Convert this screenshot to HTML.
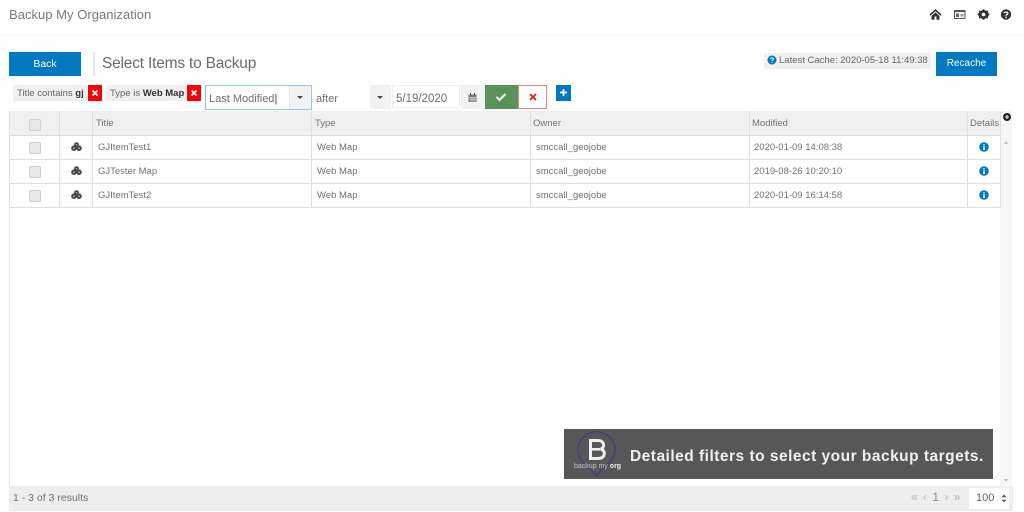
<!DOCTYPE html>
<html><head><meta charset="utf-8"><style>
html,body{margin:0;padding:0;width:1024px;height:512px;overflow:hidden;background:#fff}
body{position:relative;font-family:"Liberation Sans",sans-serif;color:#737373;font-size:9.5px}
.a{position:absolute;white-space:nowrap}
.b{position:absolute;background:#0079c1;color:#fff;text-align:center;font-size:10.5px;line-height:24px}
.l{position:absolute;background:#dedede}
.cb{position:absolute;left:29px;width:10px;height:10px;background:#e8e8e8;border:1px solid #cfcfcf;border-radius:2px}
.x{position:absolute;width:14px;height:16px;background:#f00}
.sel{position:absolute;background:#f2f2f2}
.ce{position:absolute;width:0;height:0;border-left:3px solid transparent;border-right:3px solid transparent;border-top:3px solid #444}
</style></head><body>
<div class="a" style="left:9px;top:7px;font-size:13px;letter-spacing:.03px;color:#7a7a7a">Backup My Organization</div>
<div class="l" style="left:0;top:35px;width:1024px;height:1px;background:#f3f3f3"></div>
<svg class="a" style="left:929px;top:8px" width="84" height="13" viewBox="0 0 84 13">
<path d="M.5 6.500 6.500 1 12.500 6.500 11.500 7.700 6.500 3.300 1.500 7.700ZM2.500 8 6.500 4.500 10.500 8V11.800H7.500V8.500H5.500V11.800H2.500Z" fill="#333"/>
<rect x="25.500" y="2.500" width="10.500" height="8" fill="#f4f4f4" stroke="#555"/><rect x="25.500" y="2.500" width="10.500" height="1.500" fill="#555"/><rect x="27" y="5.500" width="3" height="3.500" fill="#666"/><rect x="31.500" y="6" width="3" height="2.500" fill="#999"/>
<path d="M54.500 1 56.500 2.800 58.800 2.600 59.200 5 60.800 6.500 59.200 8 58.800 10.400 56.500 10.200 54.500 12 52.500 10.200 50.200 10.400 49.800 8 48.200 6.500 49.800 5 50.200 2.600 52.500 2.800Z" fill="#333"/><circle cx="54.500" cy="6.500" r="1.800" fill="#fff"/>
<circle cx="77" cy="6.500" r="5.200" fill="#333"/><path d="M75.200 5.200C75.400 3.700 78.800 3.700 78.800 5.400 78.800 6.600 77 6.600 77 7.800" fill="none" stroke="#fff" stroke-width="1.300"/><rect x="76.300" y="8.600" width="1.400" height="1.400" fill="#fff"/>
</svg>
<div class="b" style="left:9px;top:52px;width:72px;height:24px">Back</div>
<div class="l" style="left:93px;top:52px;width:2px;height:24px;background:#e8e8e8"></div>
<div class="a" style="left:102px;top:55px;font-size:15.5px;letter-spacing:-.2px;color:#6b6b6b">Select Items to Backup</div>
<div class="a" style="left:764px;top:53px;width:167px;height:16px;background:#f0f0f0;border-radius:2px"></div>
<svg class="a" style="left:767px;top:55px" width="10" height="10"><circle cx="5" cy="5" r="4.500" fill="#0079c1"/><path d="M3.500 4C3.600 2.500 6.500 2.500 6.500 4 6.500 5 5 5 5 6" fill="none" stroke="#fff"/><rect x="4.500" y="6.800" width="1" height="1" fill="#fff"/></svg>
<div class="a" style="left:779px;top:55px;font-size:9.5px;color:#666;line-height:12px">Latest Cache: 2020-05-18 11:49:38</div>
<div class="b" style="left:936px;top:52px;width:61px;height:24px;font-size:10px">Recache</div>

<div class="a" style="left:13px;top:85px;width:74px;height:16px;background:#f0f0f0"></div>
<div class="a" style="left:17px;top:88px;line-height:12px;color:#666">Title contains <b style="color:#333">gj</b></div>
<div class="x" style="left:88px;top:85px"></div>
<div class="a" style="left:106px;top:85px;width:80px;height:16px;background:#f0f0f0"></div>
<div class="a" style="left:110px;top:88px;line-height:12px;color:#666">Type is <b style="color:#333">Web Map</b></div>
<div class="x" style="left:187px;top:85px"></div>
<svg class="a" style="left:88px;top:85px" width="114" height="16"><path d="M4.500 5.500 9.500 10.500M9.500 5.500 4.500 10.500M103.500 5.500 108.500 10.500M108.500 5.500 103.500 10.500" stroke="#fff" stroke-width="1.800"/></svg>

<div class="sel" style="left:290px;top:86px;width:20px;height:23px"></div>
<div class="a" style="left:205px;top:85px;width:105px;height:23px;border:1px solid #8ec5e8"></div>
<div class="l" style="left:289px;top:86px;width:1px;height:23px;background:#e6e6e6"></div>
<div class="a" style="left:209px;top:92px;font-size:11px;line-height:14px;color:#707070">Last Modified<span style="color:#333;font-weight:normal">|</span></div>
<div class="ce" style="left:297px;top:96px"></div>
<div class="a" style="left:316px;top:92px;font-size:11px;line-height:14px;color:#707070">after</div>
<div class="sel" style="left:370px;top:85px;width:21px;height:24px"></div>
<div class="ce" style="left:377px;top:96px"></div>
<div class="a" style="left:392px;top:85px;width:68px;height:23px;border:1px solid #f0f0f0;box-sizing:border-box"></div>
<div class="a" style="left:396px;top:92px;font-size:11.5px;line-height:14px;color:#707070">5/19/2020</div>
<div class="sel" style="left:461px;top:85px;width:24px;height:24px"></div>
<svg class="a" style="left:468px;top:93px" width="10" height="10"><rect x=".5" y="1.500" width="8" height="7.500" fill="#777"/><path d="M1 4.500H8M1 6.500H8M3 4V9M5 4V9M7 4V9" stroke="#eee" stroke-width=".6"/><path d="M2.500 0V2M6.500 0V2" stroke="#555"/></svg>
<div class="a" style="left:485px;top:85px;width:33px;height:24px;background:#5a9359"></div>
<svg class="a" style="left:495px;top:92px" width="12" height="10"><path d="M1.500 5 4.500 8 10.500 2" fill="none" stroke="#fff" stroke-width="2"/></svg>
<div class="a" style="left:518px;top:85px;width:29px;height:24px;border:1px solid #f0806c;box-sizing:border-box;background:#fff"></div>
<svg class="a" style="left:528px;top:92px" width="10" height="10"><path d="M2 2 8 8M8 2 2 8" stroke="#e8231c" stroke-width="1.900"/></svg>
<div class="a" style="left:556px;top:85px;width:15px;height:16px;background:#0079c1"></div>
<svg class="a" style="left:559px;top:88px" width="10" height="10"><path d="M4.500 1V8M1 4.500H8" stroke="#fff" stroke-width="1.800"/></svg>

<div class="a" style="left:9px;top:111px;width:991px;height:25px;background:#f0f0f0"></div>
<div class="a" style="left:1000px;top:111px;width:12px;height:375px;background:#f6f6f6"></div>
<div class="l" style="left:9px;top:111px;width:1px;height:97px"></div>
<div class="l" style="left:59px;top:111px;width:1px;height:97px"></div>
<div class="l" style="left:92px;top:111px;width:1px;height:97px"></div>
<div class="l" style="left:311px;top:111px;width:1px;height:97px"></div>
<div class="l" style="left:530px;top:111px;width:1px;height:97px"></div>
<div class="l" style="left:749px;top:111px;width:1px;height:97px"></div>
<div class="l" style="left:967px;top:111px;width:1px;height:97px"></div>
<div class="l" style="left:1000px;top:111px;width:1px;height:97px"></div>
<div class="l" style="left:9px;top:135px;width:992px;height:1px"></div>
<div class="l" style="left:9px;top:159px;width:992px;height:1px"></div>
<div class="l" style="left:9px;top:183px;width:992px;height:1px"></div>
<div class="l" style="left:9px;top:207px;width:992px;height:1px"></div>
<div class="l" style="left:9px;top:208px;width:1px;height:278px;background:#ececec"></div>

<div class="cb" style="top:119px"></div><div class="cb" style="top:142px"></div><div class="cb" style="top:166px"></div><div class="cb" style="top:190px"></div>
<div class="a" style="left:96px;top:118px;line-height:12px">Title</div>
<div class="a" style="left:315px;top:118px;line-height:12px">Type</div>
<div class="a" style="left:533px;top:118px;line-height:12px">Owner</div>
<div class="a" style="left:752px;top:118px;line-height:12px">Modified</div>
<div class="a" style="left:970px;top:118px;line-height:12px">Details</div>

<svg class="a" style="left:71px;top:142px" width="11" height="60"><g fill="#4a4a4a"><circle cx="5.500" cy="2.700" r="2.500"/><circle cx="3" cy="6.200" r="2.800"/><circle cx="8" cy="6.200" r="2.800"/><circle cx="5.500" cy="26.700" r="2.500"/><circle cx="3" cy="30.200" r="2.800"/><circle cx="8" cy="30.200" r="2.800"/><circle cx="5.500" cy="50.700" r="2.500"/><circle cx="3" cy="54.200" r="2.800"/><circle cx="8" cy="54.200" r="2.800"/></g><g fill="#bbb"><circle cx="5.500" cy="2.700" r=".7"/><circle cx="3" cy="6.200" r=".8"/><circle cx="8" cy="6.200" r=".8"/><circle cx="5.500" cy="26.700" r=".7"/><circle cx="3" cy="30.200" r=".8"/><circle cx="8" cy="30.200" r=".8"/><circle cx="5.500" cy="50.700" r=".7"/><circle cx="3" cy="54.200" r=".8"/><circle cx="8" cy="54.200" r=".8"/></g></svg>

<div class="a" style="left:98px;top:142px;line-height:12px">GJItemTest1</div>
<div class="a" style="left:98px;top:166px;line-height:12px">GJTester Map</div>
<div class="a" style="left:98px;top:190px;line-height:12px">GJItemTest2</div>
<div class="a" style="left:317px;top:142px;line-height:12px">Web Map</div>
<div class="a" style="left:317px;top:166px;line-height:12px">Web Map</div>
<div class="a" style="left:317px;top:190px;line-height:12px">Web Map</div>
<div class="a" style="left:536px;top:142px;line-height:12px">smccall_geojobe</div>
<div class="a" style="left:536px;top:166px;line-height:12px">smccall_geojobe</div>
<div class="a" style="left:536px;top:190px;line-height:12px">smccall_geojobe</div>
<div class="a" style="left:754px;top:142px;line-height:12px">2020-01-09 14:08:38</div>
<div class="a" style="left:754px;top:166px;line-height:12px">2019-08-26 10:20:10</div>
<div class="a" style="left:754px;top:190px;line-height:12px">2020-01-09 16:14:58</div>

<svg class="a" style="left:979px;top:142px" width="10" height="58"><g fill="#0079c1"><circle cx="5" cy="5" r="4.800"/><circle cx="5" cy="29" r="4.800"/><circle cx="5" cy="53" r="4.800"/></g><path d="M4.200 2.200H5.800V3.600H4.200ZM4.200 4.500H5.800V8H4.200ZM4.200 26.200H5.800V27.600H4.200ZM4.200 28.500H5.800V32H4.200ZM4.200 50.200H5.800V51.600H4.200ZM4.200 52.500H5.800V56H4.200Z" fill="#fff"/></svg>

<svg class="a" style="left:1002px;top:112px" width="10" height="10"><circle cx="5" cy="5" r="4" fill="#222"/><path d="M3 5H7M5 3V7" stroke="#fff"/></svg>
<div class="a" style="left:1004px;top:141px;width:0;height:0;border-left:2.500px solid transparent;border-right:2.500px solid transparent;border-bottom:3px solid #bbb"></div>
<div class="a" style="left:1004px;top:479px;width:0;height:0;border-left:2.500px solid transparent;border-right:2.500px solid transparent;border-top:3px solid #bbb"></div>

<div class="a" style="left:564px;top:429px;width:429px;height:50px;background:#575757"></div>
<svg class="a" style="left:572px;top:431px" width="50" height="46"><path d="M24.500 44.500 C19 37 6 31 6 18.500 A18.500 17.500 0 0 1 43 18.500 C43 31 30 37 24.500 44.500Z" fill="none" stroke="#3f3f78" stroke-width="1.300"/><path d="M18.500 9.500H26C33 9.500 33 17 28.500 18 34 19 34 27.500 26 27.500H18.500Z" fill="none" stroke="#f0f0f0" stroke-width="3"/><path d="M19 18.300H28" stroke="#f0f0f0" stroke-width="2.500"/></svg>
<div class="a" style="left:574px;top:462px;font-size:7px;line-height:9px;color:#c4c4c4">backup my <b style="color:#eee">org</b></div>
<div class="a" style="left:630px;top:447px;font-size:15.5px;line-height:19px;font-weight:bold;color:#f0f0f0;letter-spacing:.49px">Detailed filters to select your backup targets.</div>

<div class="a" style="left:9px;top:486px;width:1004px;height:25px;background:#eeeeee"></div>
<div class="a" style="left:13px;top:492px;font-size:10.5px;line-height:13px;color:#727272">1 - 3 of 3 results</div>
<div class="a" style="left:911px;top:490px;font-size:12px;line-height:14px;color:#b0b0b0;letter-spacing:1px">«&nbsp;‹&nbsp;<span style="color:#8a8a8a">1</span>&nbsp;›&nbsp;»</div>
<div class="a" style="left:969px;top:488px;width:40px;height:21px;background:#fff"></div>
<div class="a" style="left:976px;top:491px;font-size:11px;line-height:14px;color:#666">100</div>
<svg class="a" style="left:1001px;top:494px" width="6" height="9"><path d="M3 .5 5.500 3.300H.5ZM3 8.500 .5 5.700H5.500Z" fill="#555"/></svg>
</body></html>
